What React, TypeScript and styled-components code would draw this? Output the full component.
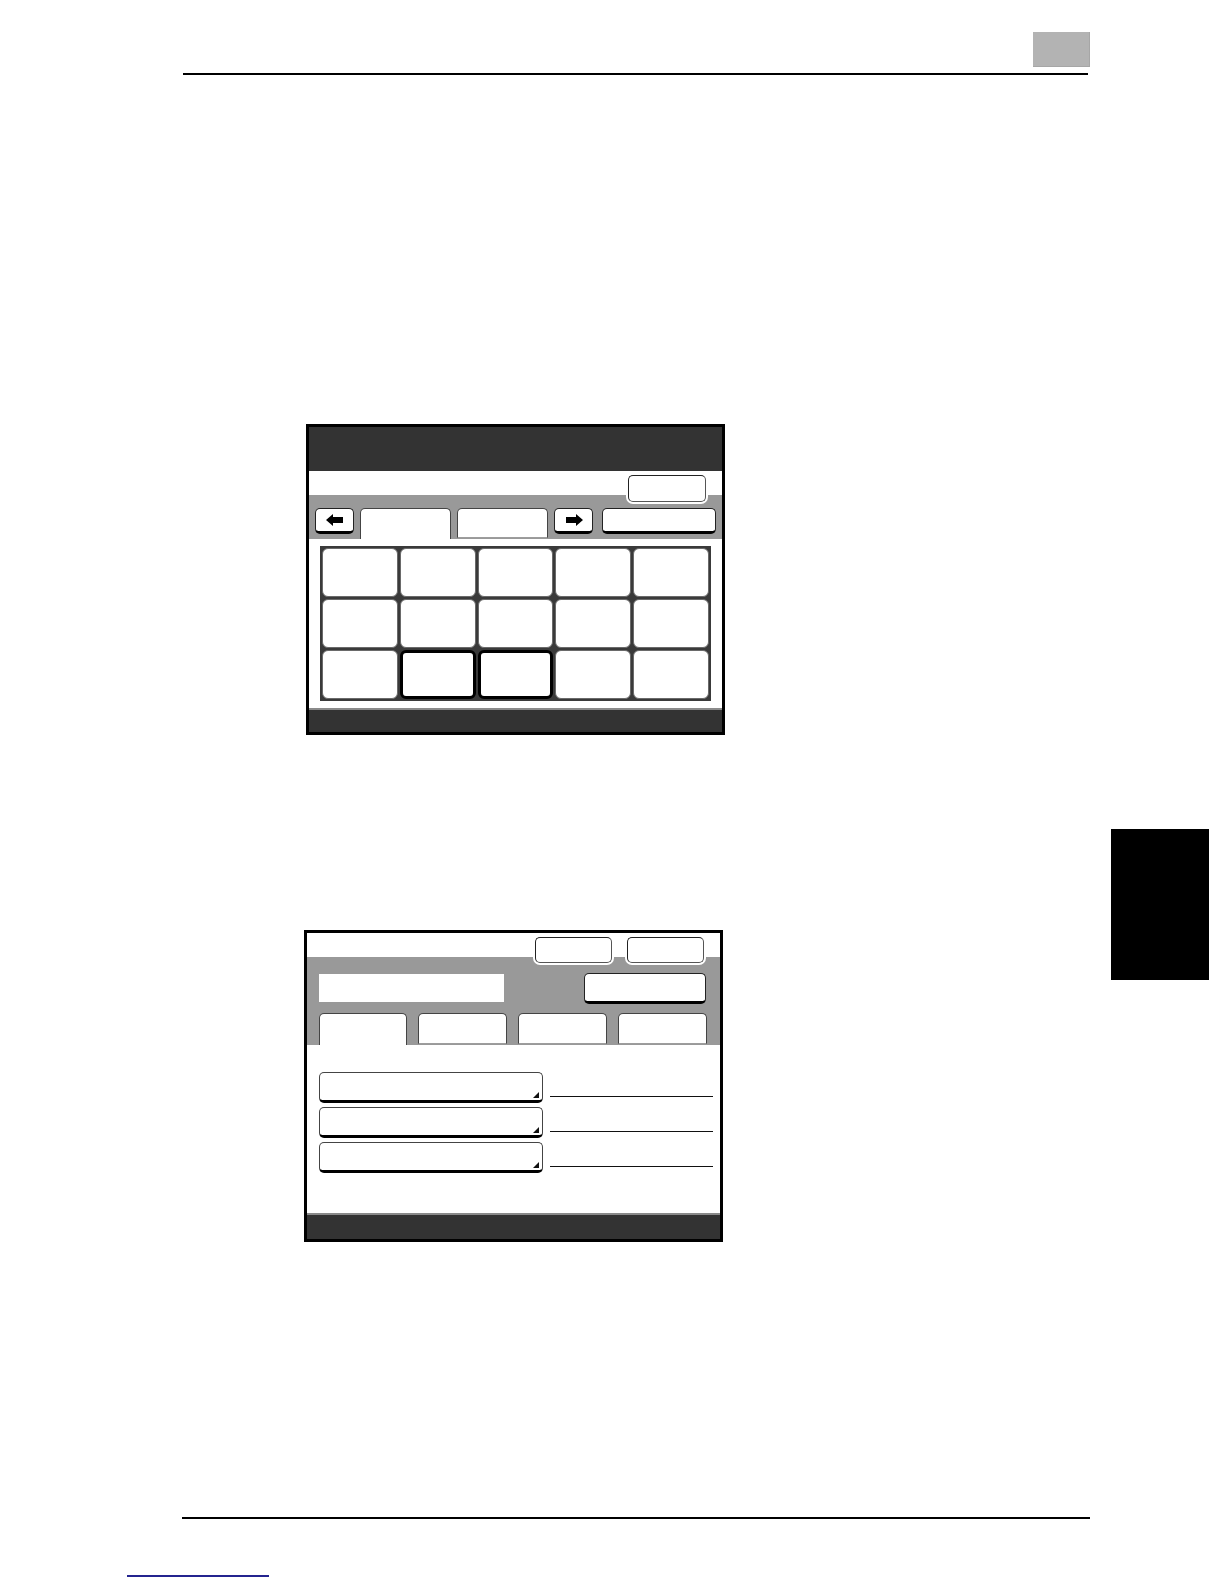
import React from "react";
import styled, { createGlobalStyle } from "styled-components";

const Global = createGlobalStyle`
  html, body { margin: 0; padding: 0; background: #fff; }
  body { font-family: "Liberation Sans", Arial, sans-serif; }
  * { box-sizing: border-box; }
`;

const Page = styled.div`
  width: 1224px;
  height: 1584px;
  display: flex;
  flex-direction: column;
  background: #fff;
  overflow: hidden;
`;

const PageHeader = styled.header`
  margin-left: 183px;
  width: 905px;
  height: 75px;
  border-bottom: 2px solid #000;
  display: flex;
  justify-content: flex-end;
  align-items: flex-end;
`;

const ChapterBox = styled.div`
  width: 57px;
  height: 35px;
  margin-right: -2px;
  margin-bottom: 6px;
  background: #b3b3b3;
  border-right: 1px solid #a6a6a6;
  border-bottom: 1px solid #a6a6a6;
`;

const Body = styled.div`
  flex: 1;
  display: flex;
`;

const Main = styled.main`
  width: 1111px;
  display: flex;
  flex-direction: column;
`;

const Side = styled.aside`
  width: 98px;
  display: flex;
  flex-direction: column;
`;

const ThumbTab = styled.div`
  margin-top: 754px;
  width: 98px;
  height: 151px;
  background: #000;
`;

const Figure = styled.figure<{ $top: number; $left: number }>`
  margin: ${(p) => p.$top}px 0 0 ${(p) => p.$left}px;
`;

const Screen = styled.div<{ $h: number }>`
  width: 419px;
  height: ${(p) => p.$h}px;
  border: 3px solid #000;
  display: flex;
  flex-direction: column;
  background: #fff;
`;

const DarkBar = styled.div<{ $h: number; $edge?: boolean }>`
  height: ${(p) => p.$h}px;
  flex: none;
  background: #333;
  ${(p) => (p.$edge ? "border-top: 2px solid #8a8a8a;" : "")}
`;

const TopArea = styled.div<{ $h: number }>`
  height: ${(p) => p.$h}px;
  flex: none;
  background: linear-gradient(#fff 0 24px, #999 24px 100%);
  display: flex;
  flex-direction: column;
`;

const ButtonRow = styled.div<{ $gap?: number }>`
  display: flex;
  justify-content: flex-end;
  gap: ${(p) => p.$gap ?? 0}px;
  padding: 4px 16px 0 0;
`;

const SmallButton = styled.div<{ $w: number; $h: number }>`
  width: ${(p) => p.$w}px;
  height: ${(p) => p.$h}px;
  background: #fff;
  border: 1.5px solid #222;
  border-right-color: #555;
  border-bottom-color: #555;
  border-radius: 5px;
  box-shadow: 0 0 0 2px #fff;
`;

const RaisedButton = styled.div<{ $w: number; $h: number; $ml?: number }>`
  width: ${(p) => p.$w}px;
  height: ${(p) => p.$h}px;
  margin-left: ${(p) => p.$ml ?? 0}px;
  flex: none;
  background: #fff;
  border: 1.5px solid #222;
  border-bottom: 3px solid #000;
  border-radius: 5px;
  display: flex;
  align-items: center;
  justify-content: center;
`;

const TabRow = styled.div<{ $h: number; $mt: number; $pl: number }>`
  height: ${(p) => p.$h}px;
  margin-top: ${(p) => p.$mt}px;
  padding-left: ${(p) => p.$pl}px;
  display: flex;
  align-items: flex-start;
`;

const Tab = styled.div<{ $w: number; $ml?: number; $active?: boolean }>`
  width: ${(p) => p.$w}px;
  margin-left: ${(p) => p.$ml ?? 0}px;
  height: ${(p) => (p.$active ? "100%" : "calc(100% - 1px)")};
  flex: none;
  background: #fff;
  border: 1px solid #444;
  border-bottom: ${(p) => (p.$active ? "none" : "1px solid #9d9d9d")};
  border-radius: 5px 5px 0 0;
`;

const Content = styled.div<{ $h: number }>`
  height: ${(p) => p.$h}px;
  flex: none;
  background: #fff;
`;

const KeyGrid = styled.div`
  margin: 7px 0 0 11px;
  width: 391px;
  height: 155px;
  background: #3a3a3a;
  padding: 2px;
  gap: 2px;
  display: grid;
  grid-template-columns: repeat(5, 1fr);
  grid-template-rows: repeat(3, 1fr);
`;

const Key = styled.div<{ $selected?: boolean }>`
  background: #fff;
  border-radius: 6px;
  border: ${(p) => (p.$selected ? "3px solid #000" : "1px solid #6a6a6a")};
`;

const InputRow = styled.div`
  margin-top: 10px;
  padding: 0 14px 0 12px;
  display: flex;
  align-items: flex-start;
  justify-content: space-between;
`;

const TextBox = styled.div`
  width: 185px;
  height: 28px;
  margin-top: 1px;
  background: #fff;
`;

const FieldList = styled.div`
  padding: 27px 0 0 12px;
  display: flex;
  flex-direction: column;
  gap: 4px;
`;

const FieldRow = styled.div`
  display: flex;
  align-items: flex-end;
`;

const Field = styled.div`
  position: relative;
  width: 224px;
  height: 31px;
  background: #fff;
  border: 1.5px solid #444;
  border-bottom: 3px solid #000;
  border-radius: 5px;
  &::after {
    content: "";
    position: absolute;
    right: 3px;
    bottom: 2px;
    width: 0;
    height: 0;
    border-left: 6px solid transparent;
    border-bottom: 6px solid #111;
  }
`;

const FieldLine = styled.div`
  width: 163px;
  margin: 0 0 6px 7px;
  border-top: 1.5px solid #111;
`;

const PageFooter = styled.footer`
  display: flex;
  flex-direction: column;
  padding-bottom: 7px;
`;

const FooterRule = styled.div`
  margin-left: 182px;
  width: 908px;
  border-top: 2px solid #000;
`;

const LinkLine = styled.div`
  margin: 56px 0 0 127px;
  width: 142px;
  border-top: 2px solid #24248f;
`;

const Arrow = ({ dir }: { dir: "left" | "right" }) => (
  <svg width="18" height="12" viewBox="0 0 18 12">
    <polygon
      fill="#000"
      points="0,6 7,0 7,3 17,3 17,9 7,9 7,12"
      transform={dir === "right" ? "translate(18,0) scale(-1,1)" : undefined}
    />
  </svg>
);

const keys = Array.from({ length: 15 }, (_, i) => i);

export default function App() {
  return (
    <Page>
      <Global />
      <PageHeader>
        <ChapterBox />
      </PageHeader>
      <Body>
        <Main>
          <Figure $top={349} $left={306}>
            <Screen $h={311}>
              <DarkBar $h={44} />
              <TopArea $h={68}>
                <ButtonRow>
                  <SmallButton $w={78} $h={27} />
                </ButtonRow>
                <TabRow $h={31} $mt={6} $pl={6}>
                  <RaisedButton $w={39} $h={26}>
                    <Arrow dir="left" />
                  </RaisedButton>
                  <Tab $w={91} $ml={6} $active />
                  <Tab $w={91} $ml={6} />
                  <RaisedButton $w={39} $h={26} $ml={6}>
                    <Arrow dir="right" />
                  </RaisedButton>
                  <RaisedButton $w={114} $h={26} $ml={9} />
                </TabRow>
              </TopArea>
              <Content $h={169}>
                <KeyGrid>
                  {keys.map((k) => (
                    <Key key={k} $selected={k === 11 || k === 12} />
                  ))}
                </KeyGrid>
              </Content>
              <DarkBar $h={24} $edge />
            </Screen>
          </Figure>
          <Figure $top={195} $left={304}>
            <Screen $h={312}>
              <TopArea $h={112}>
                <ButtonRow $gap={15}>
                  <SmallButton $w={77} $h={26} />
                  <SmallButton $w={77} $h={26} />
                </ButtonRow>
                <InputRow>
                  <TextBox />
                  <RaisedButton $w={122} $h={31} />
                </InputRow>
                <TabRow $h={32} $mt={9} $pl={12}>
                  <Tab $w={88} $active />
                  <Tab $w={89} $ml={11} />
                  <Tab $w={89} $ml={11} />
                  <Tab $w={89} $ml={11} />
                </TabRow>
              </TopArea>
              <Content $h={168}>
                <FieldList>
                  <FieldRow>
                    <Field />
                    <FieldLine />
                  </FieldRow>
                  <FieldRow>
                    <Field />
                    <FieldLine />
                  </FieldRow>
                  <FieldRow>
                    <Field />
                    <FieldLine />
                  </FieldRow>
                </FieldList>
              </Content>
              <DarkBar $h={26} $edge />
            </Screen>
          </Figure>
        </Main>
        <Side>
          <ThumbTab />
        </Side>
      </Body>
      <PageFooter>
        <FooterRule />
        <LinkLine />
      </PageFooter>
    </Page>
  );
}
